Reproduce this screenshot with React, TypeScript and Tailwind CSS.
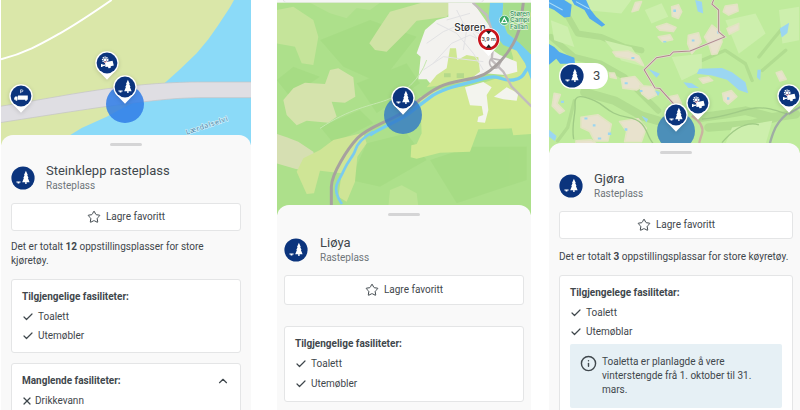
import type { ReactNode } from "react"
import clsx from "clsx"
import { Check, ChevronUp, Info, Star, X } from "lucide-react"

type Symbol = "tree" | "camera" | "truck"

const TreeShape = () => (
  <g fill="#fff">
    <path d="M14.9 4.8 16.8 9h-.6l1.3 3h-.6l1.7 4.2h-3v1.7h-1.4v-1.7h-3l1.7-4.2h-.6l1.3-3H13z" />
    <path d="M5.4 15.4h4.2v1H8.4v1H6.6v-1H5.4z" />
  </g>
)

const CameraShape = () => (
  <g fill="#fff">
    <path d="M10 11.2 17.6 9.8l1.2 4.8-3 .7-.2 1.8-2.2.2-.4-1.6-2.6.4z" />
    <path d="M6 13.2l1.2-.4.5.9 2.2-.3.2 1.4-2.4.4-.5.8-1.2-.1z" />
    <circle cx="10.2" cy="8.7" r="2.5" fill="none" stroke="#fff" strokeWidth="1.6" strokeDasharray="1.2 .6" />
    <circle cx="10.2" cy="8.7" r="1.5" />
    <path d="M9 11.4l2.8-.9" stroke="#d64545" strokeWidth=".6" />
  </g>
)

const TruckShape = () => (
  <g fill="#fff">
    <path d="M9 11.6h9.8v4.2H9zM8.6 12.4v3.4H5.2v-1.9l1-1.5z" />
    <circle cx="7.4" cy="15.9" r=".9" />
    <circle cx="17" cy="15.9" r=".9" />
    <path d="M11.6 9.2V5.8h1.3a1 1 0 0 1 0 2h-1.2" fill="none" stroke="#fff" strokeWidth=".7" />
  </g>
)

function SymbolShape({ symbol }: { symbol: Symbol }) {
  if (symbol === "camera") return <CameraShape />
  if (symbol === "truck") return <TruckShape />
  return <TreeShape />
}

function Badge({ className }: { className?: string }) {
  return (
    <svg viewBox="0 0 24 24" className={clsx("shrink-0", className)} aria-hidden="true">
      <circle cx="12" cy="12" r="11.6" fill="#0b347d" />
      <TreeShape />
    </svg>
  )
}

function Pin({ symbol, label, className }: { symbol: Symbol; label: string; className: string }) {
  return (
    <button type="button" aria-label={label} className={clsx("absolute", className)}>
      <svg viewBox="0 0 24 30" className="h-[30px] w-6 overflow-visible drop-shadow-sm">
        <path d="M2.8 19 12 28.8 21.2 19z" fill="#fff" />
        <circle cx="12" cy="12" r="11.7" fill="#fff" />
        <circle cx="12" cy="12" r="10.4" fill="#0b347d" />
        <SymbolShape symbol={symbol} />
      </svg>
    </button>
  )
}

function Halo({ className }: { className: string }) {
  return <span className={clsx("absolute size-[38px] rounded-full", className)} />
}

function RiverMap() {
  return (
    <svg viewBox="3 0 750 435" preserveAspectRatio="xMidYMin slice" className="size-full" aria-hidden="true">
      <rect width="760" height="440" fill="#dae7a9" />
      <path d="M3 178C80 158 130 128 180 100S280 38 335 0" fill="none" stroke="#fff" strokeWidth="6" />
      <path d="M702 0 690 22 655 75 625 118 590 160 540 208 480 262H760V0z" fill="#8bdaf8" />
      <path d="M200 412 245 384 320 350 380 318 440 290H760V440H170z" fill="#8bdaf8" />
      <path
        d="M0 319C120 300 230 278 330 265S520 246 600 246H760V293H600C520 294 480 300 400 309S180 340 0 368z"
        fill="#dfdee3"
        stroke="#c3c3c4"
        strokeWidth="2"
      />
      <path id="river" d="M560 404 720 350" fill="none" />
      <text
        fontFamily="Noto Sans, sans-serif"
        fontSize="21"
        letterSpacing="2"
        fill="#4e87a8"
        stroke="#d3effa"
        strokeWidth="4"
        paintOrder="stroke"
      >
        <textPath href="#river">Lærdalselvi</textPath>
      </text>
    </svg>
  )
}

function ValleyMap() {
  return (
    <svg viewBox="21 0 762 648" preserveAspectRatio="xMidYMin slice" className="size-full" aria-hidden="true">
      <rect width="800" height="650" fill="#ade08b" />
      <g fill="#a2d980" opacity=".55">
        <path d="M150 120 300 60 440 110 330 250 220 200zM260 250l150-60 40 60-130 90zM290 430l120-30 60 80-140 80-90-20zM480 480l120-40 170 0v100l-210 70z" />
        <path d="M20 240 70 200 150 230 60 290zM150 380l120-50 40 40-120 60z" />
      </g>
      <path d="M20 30 70 20 130 60 145 110 130 195 95 190 75 140 20 130z" fill="#c5e49a" />
      <path d="M120 8H330L300 30 260 24 230 55 180 40z" fill="#b7e294" />
      <path d="M360 35 455 8H560L530 50 440 62 410 95 350 155 315 150 298 130 330 80z" fill="#d0e3a5" />
      <path d="M40 300 70 265 105 248 165 252 180 210 205 205 250 232 256 290 225 308 185 305 200 350 175 368 110 362 80 376 50 345z" fill="#d5e3ac" />
      <path d="M20 402 50 412 85 425 130 455 135 478 112 515 70 505 20 490z" fill="#d6dfb2" />
      <path d="M100 475 150 450 190 420 280 398 290 430 262 470 255 545 230 605 205 590 215 520 150 512 132 580 110 582 80 515z" fill="#cfe596" />
      <path d="M360 570 395 556 440 580 445 620H355z" fill="#bce495" />
      <path d="M450 290 510 268 620 255 710 225 730 175 720 140 750 150 785 190V402L730 406 725 385 625 388 600 455 510 458 440 476 422 472 424 436 440 432 455 400z" fill="#d1e992" />
      <path d="M535 8H610L660 80 668 150 690 165 740 185 742 215 705 225 645 220 600 236 540 248 482 252 470 238 445 238 452 170 440 160 465 90 500 60 535 50z" fill="#f3f2ef" />
      <path d="M540 145H558L562 180 590 165 625 172 630 215 590 245 520 255 470 262 500 225 530 205z" fill="#cfe792" />
      <path d="M585 262 640 246 665 262 650 285 655 330 645 368 622 366 625 350 640 345 635 318 600 316zM672 290 710 262 745 280 740 302 700 298z" fill="#f3f4ee" />
      <path d="M522 220h20v12h-20zM560 220h22v14h-22z" fill="#b4d98a" />
      <g fill="none" stroke="#e2e2e4" strokeWidth="3">
        <path d="M470 130 520 95 580 70 640 110M490 190 545 130 600 105 650 130M500 70 560 100 610 160 640 210M560 30 590 90 580 150M530 60 600 40M460 210 520 170 640 185M610 100 655 160" />
      </g>
      <path d="M150 385C240 325 300 318 350 300S450 240 470 180" fill="none" stroke="#c6e8b0" strokeWidth="3" />
      <path d="M660 8H700L696 60 712 100 750 130 785 165V245L765 190 740 152 700 135 672 100 655 60z" fill="#74cdf1" />
      <path d="M785 195C760 205 770 235 730 240S690 220 640 236 520 262 480 292 430 330 410 345 330 385 300 405" fill="none" stroke="#74cdf1" strokeWidth="10" />
      <path d="M310 395C280 412 262 430 256 450S235 480 222 510 192 555 200 580 212 605 216 612" fill="none" stroke="#7bcbee" strokeWidth="8" />
      <path d="M700 8H785V165L745 125 712 95z" fill="#a6dd8c" />
      <path d="M608 8 650 45 672 110 665 180 700 215 725 260 785 320" fill="none" stroke="#c2bcbd" strokeWidth="7" />
      <path d="M665 175a16 16 0 1 0 20 26l10-20z" fill="none" stroke="#bdb8b9" strokeWidth="5" />
      <path d="M760 8 752 70C740 130 700 180 660 212S560 236 510 260 430 320 385 345 290 385 262 415 185 520 184 560V615" fill="none" stroke="#a7a19f" strokeWidth="9" />
      <rect width="800" height="8" fill="#f7f7f7" />
      <path d="M40 0H640Q640 6 632 6H48Q40 6 40 0z" fill="#fff" stroke="#d5d5d5" strokeWidth="1.5" />
      <text x="553" y="94" fontFamily="Inter, sans-serif" fontSize="30" fontWeight="500" fill="#333" stroke="#fff" strokeWidth="4" paintOrder="stroke">
        Støren
      </text>
      <g fontFamily="Inter, sans-serif" fontSize="19" fontWeight="500" fill="#37915c" stroke="#e3f3dc" strokeWidth="4" paintOrder="stroke">
        <text x="720" y="47">Støren</text>
        <text x="720" y="67">Campi</text>
        <text x="720" y="87">Fallan</text>
      </g>
      <circle cx="703" cy="61" r="15" fill="#37a866" stroke="#fff" strokeWidth="2" />
      <path d="M703 53 711 68H695z" fill="none" stroke="#fff" strokeWidth="3.5" />
      <path d="M634 144 656 169 678 144z" fill="#fff" />
      <circle cx="656" cy="118" r="34" fill="#fff" />
      <circle cx="656" cy="118" r="28" fill="#fff" stroke="#c8141c" strokeWidth="8" />
      <path d="M648 93h16l-8 10zM648 143h16l-8-10z" fill="#222" />
      <text x="656" y="124" textAnchor="middle" fontFamily="Inter, sans-serif" fontSize="16" fontWeight="500" fill="#333">
        3,9 m
      </text>
    </svg>
  )
}

function MountainMap() {
  return (
    <svg viewBox="12 0 753 456" preserveAspectRatio="xMidYMin slice" className="size-full" aria-hidden="true">
      <rect width="770" height="460" fill="#bfeb9c" />
      <g fill="none" stroke="#aeda8e" strokeLinecap="round" strokeLinejoin="round" opacity=".8">
        <path d="M60 30 100 100 170 110 240 140 290 150M20 110 90 170 170 190 240 230 300 290 340 330" strokeWidth="18" />
        <path d="M120 275 210 300 290 345 340 360M470 350 540 340 600 330 680 350 750 340M490 380 620 370 690 350" strokeWidth="26" />
        <path d="M470 180 540 150 600 190 620 240M640 170 680 120 730 60M650 210 720 150M90 300 70 380 40 420" strokeWidth="10" />
      </g>
      <g fill="#cdefad">
        <path d="M60 0H260L230 40 120 30zM300 30l50-20 20 40-50 20zM540 60l90-20 30 60-80 60zM380 170l90-10 0 50-60 30zM560 380l120-20-20 70H540z" />
        <path d="M180 120l80 20 40 60-70-20zM20 60l50 20 20 60-60-20zM700 30l60-10v100l-50 10z" />
      </g>
      <g fill="#e8e2cd" stroke="#e2e4c2" strokeWidth="5" strokeLinejoin="round">
        <path d="M380 20 400 14 410 35 400 55 382 48zM272 8 290 5 280 30 262 35zM335 80l30-10 28 12-8 12-40-4zM340 110l35-6 8 14-30 6z" />
        <path d="M430 105 460 98 468 125 440 160 428 130zM478 110 500 75 525 95 530 125 515 160 500 162 490 130zM545 85 580 70 580 88 552 102zM540 18l35-5 3 20-28 12-16-10z" />
        <path d="M205 155 250 152 282 167 296 195 270 180 215 168zM195 218l14 0 6 16-18-4zM230 234l40-6 25 28-20 12-40-5zM285 255l40 4 10 24-24 12-20-16zM375 288l22-5 12 26-20 13z" />
        <path d="M30 278l18 4-10 26 22 22-14 8-22-22zM110 350l50-8 40 28-10 50H150l-14-28-26-12zM225 362l55-8 24 28-14 40H240l6-30zM462 234l28-4 12 10-28 8zM532 278l26-8 16 18-26 22-12-10zM692 217l16-5 13 24-18 5zM95 420l45-3 16 12H95z" />
      </g>
      <g fill="#9bd6f1">
        <path d="M450 0 470 5 474 40 458 34zM462 205 530 203 560 215 600 245 608 278 580 268 545 238 500 225 455 220zM415 245 440 248 462 262 430 262zM702 85 730 68 725 98 708 112zM636 208l10 0-2 32-10-10z" />
        <path d="M12 385l25 20-5 15-20-14zM310 205l35 15-10 12zM290 345l20 10-5 10zM330 270l15 4-5 12z" />
        <path d="M385 28h8v8h-8zM440 118h8v6h-8zM515 92h8v8h-8zM240 245h9v6h-9zM285 268h8v6h-8zM145 370h8v7h-8zM190 395h10v7h-10zM240 382h8v8h-8zM50 300h9v7h-9zM545 290h7v7h-7zM120 350h9v6h-9zM260 170h9v6h-9zM355 122h9v5h-9zM160 410h10v6h-10z" />
      </g>
      <g fill="#52a9ee">
        <path d="M12 0H60L82 14 78 50 60 52 30 30 12 22zM82 0H125L138 28 155 50 182 74 172 80 135 55 120 30 90 14zM12 130 30 140 45 155 90 172 92 190H48L36 175 12 195z" />
      </g>
      <path d="M15 8 55 30M95 5l40 22" stroke="#a8dcf7" strokeWidth="3" />
      <g fill="none" stroke="#a0cb86" strokeWidth="4">
        <path d="M88 415C80 370 95 340 92 310S115 285 150 300 190 340 250 350 300 400 325 428" />
        <path d="M530 425C560 390 600 360 640 372M470 355C540 350 590 325 630 322S690 330 725 340" />
      </g>
      <path d="M725 338C705 355 690 375 683 395S674 420 672 432" fill="none" stroke="#9faca4" strokeWidth="7" />
      <path d="M765 318 728 340" stroke="#9faca4" strokeWidth="6" />
      <path d="M440 345C470 365 475 385 470 400S462 420 462 432" fill="none" stroke="#c9b3a0" strokeWidth="7" />
      <path d="M505 0 500 12 520 30V95L538 110 435 152 385 155 375 165 335 172 298 208 330 262 345 264 388 312" fill="none" stroke="#e4dbd3" strokeWidth="7" />
      <path d="M505 0 500 12 520 30V95L538 110 435 152 385 155 375 165 335 172 298 208 330 262 345 264 388 312" fill="none" stroke="#b08a8c" strokeWidth="3" />
    </svg>
  )
}

interface SheetProps {
  title: string
  large?: boolean
  className?: string
  children: ReactNode
}

function Sheet({ title, large, className, children }: SheetProps) {
  return (
    <section className={clsx("relative -mt-2.5 grow rounded-t-xl bg-[#f9f9f9] pt-2", className)}>
      <div className="mx-auto h-[3px] w-8 rounded-full bg-[#d5d5d6]" />
      <header className={clsx("flex items-center", large ? "mt-[19px] gap-3" : "mt-[17px] gap-[11px]")}>
        <Badge className="size-6" />
        <div>
          <h2 className="text-[13px] leading-4">{title}</h2>
          <p className="leading-[14px] text-[#6f7579]">Rasteplass</p>
        </div>
      </header>
      <button
        type="button"
        className={clsx(
          "mt-[10px] flex w-full items-center justify-center gap-[5px] rounded-[3px] border border-[#e4e5e6] bg-white",
          large ? "h-[30px]" : "h-7",
        )}
      >
        <Star className="size-[14px]" strokeWidth={1.7} />
        Lagre favoritt
      </button>
      {children}
    </section>
  )
}

function Card({ className, children }: { className?: string; children: ReactNode }) {
  return (
    <div className={clsx("rounded-[3px] border border-[#e4e5e6] bg-white px-[10px] pt-[10px] pb-[7px]", className)}>
      {children}
    </div>
  )
}

function Facilities({ title, items, large }: { title: string; items: string[]; large?: boolean }) {
  return (
    <>
      <h3 className="font-bold">{title}</h3>
      <ul className="mt-[3px]">
        {items.map((item) => (
          <li key={item} className={clsx("flex items-center gap-1", large ? "h-5" : "h-[19px]")}>
            <Check className="size-3" strokeWidth={2.4} />
            {item}
          </li>
        ))}
      </ul>
    </>
  )
}

export default function App() {
  return (
    <main className="flex h-screen overflow-hidden bg-white pl-px font-['Roboto',sans-serif] text-[10px] leading-[14px] text-[#3f474c]">
      <article className="flex min-w-0 flex-[250] flex-col">
        <div className="relative h-[145px] shrink-0 overflow-hidden">
          <RiverMap />
          <Halo className="top-[85px] left-[105px] bg-[#2f7de8]/85" />
          <Pin symbol="camera" label="Kamera" className="top-[51px] left-[94px]" />
          <Pin symbol="tree" label="Steinklepp rasteplass" className="top-[75px] left-[112px]" />
          <Pin symbol="truck" label="Døgnkvileplass" className="top-[84px] left-[8px]" />
        </div>
        <Sheet title="Steinklepp rasteplass" className="px-[10px]">
          <p className="mt-[9px] pr-5">
            Det er totalt <b>12</b> oppstillingsplasser for store kjøretøy.
          </p>
          <Card className="mt-[11px]">
            <Facilities title="Tilgjengelige fasiliteter:" items={["Toalett", "Utemøbler"]} />
          </Card>
          <Card className="mt-[10px]">
            <button type="button" aria-expanded="true" className="flex w-full items-center justify-between font-bold">
              Manglende fasiliteter:
              <ChevronUp className="size-[14px]" strokeWidth={2} />
            </button>
            <ul className="mt-[3px]">
              <li className="flex h-[19px] items-center gap-[2px]">
                <X className="-ml-px size-3" strokeWidth={2.4} />
                Drikkevann
              </li>
            </ul>
          </Card>
        </Sheet>
      </article>

      <article className="ml-[26px] flex min-w-0 flex-[254] flex-col">
        <div className="relative h-[215px] shrink-0 overflow-hidden">
          <ValleyMap />
          <Halo className="top-[96px] left-[107px] bg-[#3078c8]/80" />
          <Pin symbol="tree" label="Liøya" className="top-[86px] left-[114px]" />
        </div>
        <Sheet title="Liøya" large className="px-[7px]">
          <Card className="mt-[21px]">
            <Facilities title="Tilgjengelige fasiliteter:" items={["Toalett", "Utemøbler"]} large />
          </Card>
        </Sheet>
      </article>

      <article className="ml-[18px] flex min-w-0 flex-[251] flex-col">
        <div className="relative h-[153px] shrink-0 overflow-hidden">
          <MountainMap />
          <Halo className="top-[112px] left-[108px] bg-[#3078c0]/80" />
          <Pin symbol="camera" label="Kamera" className="top-[91px] left-[137px]" />
          <Pin symbol="camera" label="Kamera" className="top-[84px] left-[228px]" />
          <Pin symbol="tree" label="Gjøra" className="top-[103px] left-[115px]" />
          <button
            type="button"
            aria-label="3 rasteplasser"
            className="absolute top-[63px] left-[10px] flex h-[26px] w-[49px] items-center gap-[9px] rounded-full bg-white pl-px text-[13px]"
          >
            <Badge className="size-6" />
            3
          </button>
        </div>
        <Sheet title="Gjøra" className="pr-[7px] pl-[10px]">
          <p className="mt-[11px]">
            Det er totalt <b>3</b> oppstillingsplassar for store køyretøy.
          </p>
          <Card className="mt-[11px]">
            <Facilities title="Tilgjengelege fasilitetar:" items={["Toalett", "Utemøblar"]} />
            <div className="mt-[3px] flex items-start gap-[5px] rounded-[2px] bg-[#e6f0f5] px-[10px] py-[11px]">
              <Info className="size-[17px] shrink-0" strokeWidth={2} />
              <p className="pr-2.5">Toaletta er planlagde å vere vinterstengde frå 1. oktober til 31. mars.</p>
            </div>
          </Card>
        </Sheet>
      </article>
    </main>
  )
}
